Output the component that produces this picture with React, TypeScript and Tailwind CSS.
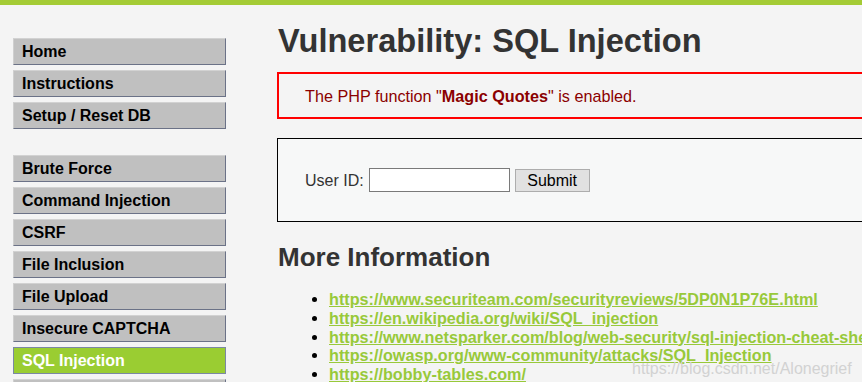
import React from "react";

const group1 = ["Home", "Instructions", "Setup / Reset DB"];
const group2 = [
  "Brute Force",
  "Command Injection",
  "CSRF",
  "File Inclusion",
  "File Upload",
  "Insecure CAPTCHA",
  "SQL Injection",
  "SQL Injection (Blind)",
];

const links = [
  "https://www.securiteam.com/securityreviews/5DP0N1P76E.html",
  "https://en.wikipedia.org/wiki/SQL_injection",
  "https://www.netsparker.com/blog/web-security/sql-injection-cheat-sheet/",
  "https://owasp.org/www-community/attacks/SQL_Injection",
  "https://bobby-tables.com/",
];

function NavItem({ label, active }: { label: string; active?: boolean }) {
  return (
    <div
      className={
        active
          ? "h-[27px] shrink-0 flex items-center pl-[8px] pt-[1px] border border-[#7b88a3] bg-[#9acd32] text-white font-bold text-[16px]"
          : "h-[27px] shrink-0 flex items-center pl-[8px] pt-[1px] border-t border-l border-t-[#d2d2d2] border-l-[#cfcfcf] border-r border-b border-r-[#6b7287] border-b-[#6b7287] bg-[#c0c0c0] text-black font-bold text-[16px]"
      }
    >
      {label}
    </div>
  );
}

export default function App() {
  return (
    <div
      className="relative w-[862px] h-[382px] overflow-hidden bg-[#f4f4f4]"
      style={{ fontFamily: '"Liberation Sans", Arial, sans-serif' }}
    >
      <div className="h-[5px] bg-[#a4cb35]" />
      <div className="flex">
        <div className="w-[226px] shrink-0 pl-[13px] pt-[33px] flex flex-col">
          <div className="flex flex-col gap-[5px]">
            {group1.map((l) => (
              <NavItem key={l} label={l} />
            ))}
          </div>
          <div className="flex flex-col gap-[5px] mt-[26px]">
            {group2.map((l) => (
              <NavItem key={l} label={l} active={l === "SQL Injection"} />
            ))}
          </div>
        </div>
        <div className="ml-[51px] w-[700px] shrink-0 pt-[20px] text-[#333]">
          <h1 className="text-[32.6px] leading-[32px] font-bold text-[#333] pl-[1px] whitespace-nowrap">
            Vulnerability: SQL Injection
          </h1>
          <div className="mt-[15px] h-[47px] border-2 border-[#ff0000] flex items-center pl-[26px] pt-[1px] text-[16.2px] text-[#8b0000] whitespace-nowrap">
            The PHP function "<b>Magic Quotes</b>" is enabled.
          </div>
          <div className="mt-[19px] h-[84px] border border-black bg-[#f7f8f8] flex items-center pl-[27px] text-[16px] text-[#333]">
            <span className="pt-[1px]">User ID:</span>
            <div className="ml-[5px] w-[141px] h-[24px] border border-[#7a7a7a] bg-white" />
            <div className="ml-[5px] w-[75px] h-[23px] border border-[#adadad] bg-[#e1e1e1] flex items-center justify-center pt-[1px] text-black text-[16px]">
              Submit
            </div>
          </div>
          <h2 className="mt-[22px] text-[26px] leading-[26px] font-bold text-[#333] pl-[1px]">
            More Information
          </h2>
          <ul className="mt-[20px] list-disc pl-[52px] text-[16.2px] leading-[18.75px]">
            {links.map((l) => (
              <li key={l} className="whitespace-nowrap text-black">
                <span className="font-bold text-[#98c93a] underline">{l}</span>
              </li>
            ))}
          </ul>
        </div>
      </div>
      <div className="absolute left-[632px] top-[357px] text-[16px] text-[#d2d2d2] whitespace-nowrap">
        https://blog.csdn.net/Alonegrief
      </div>
    </div>
  );
}
